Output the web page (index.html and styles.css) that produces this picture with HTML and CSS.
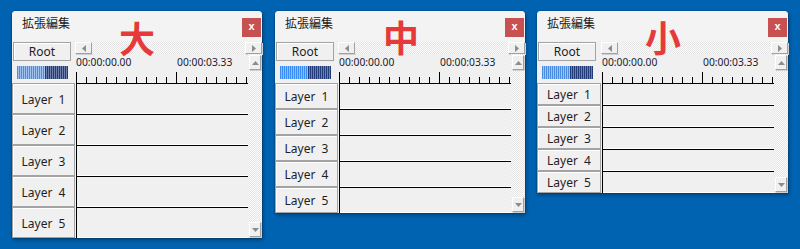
FILE: index.html
```html
<!DOCTYPE html>
<html lang="ja">
<head>
<meta charset="utf-8">
<title>拡張編集</title>
<link rel="stylesheet" href="styles.css">
</head>
<body>
<div class="desk">

  <div class="win win-l">
    <div class="titlebar"><span class="title">拡張編集</span><span class="close">x</span></div>
    <div class="body">
      <div class="lefthead"><div class="btn root">Root</div><div class="meter"></div></div>
      <div class="hscroll">
        <div class="sbtn sbtn-h"><svg width="4" height="7" viewBox="0 0 4 7"><path d="M4 0V7L0 3.5Z"/></svg></div>
        <div class="track"></div>
        <div class="sbtn sbtn-h"><svg width="4" height="7" viewBox="0 0 4 7"><path d="M0 0V7L4 3.5Z"/></svg></div>
      </div>
      <div class="header">
        <div class="times"><span class="tc">00:00:00.00</span><span class="tc">00:00:03.33</span></div>
        <div class="ruler"></div>
      </div>
      <div class="vscroll">
        <div class="sbtn sbtn-v up"><svg width="7" height="4" viewBox="0 0 7 4"><path d="M0 4H7L3.5 0Z"/></svg></div>
        <div class="sbtn sbtn-v down"><svg width="7" height="4" viewBox="0 0 7 4"><path d="M0 0H7L3.5 4Z"/></svg></div>
      </div>
      <div class="layers">
        <div class="btn layer">Layer  1</div>
        <div class="btn layer">Layer  2</div>
        <div class="btn layer">Layer  3</div>
        <div class="btn layer">Layer  4</div>
        <div class="btn layer">Layer  5</div>
      </div>
      <div class="tracks">
        <div class="row"></div><div class="row"></div><div class="row"></div><div class="row"></div><div class="row"></div>
      </div>
    </div>
  </div>

  <div class="win win-m">
    <div class="titlebar"><span class="title">拡張編集</span><span class="close">x</span></div>
    <div class="body">
      <div class="lefthead"><div class="btn root">Root</div><div class="meter meter-hi"></div></div>
      <div class="hscroll">
        <div class="sbtn sbtn-h"><svg width="4" height="7" viewBox="0 0 4 7"><path d="M4 0V7L0 3.5Z"/></svg></div>
        <div class="track"></div>
        <div class="sbtn sbtn-h"><svg width="4" height="7" viewBox="0 0 4 7"><path d="M0 0V7L4 3.5Z"/></svg></div>
      </div>
      <div class="header">
        <div class="times"><span class="tc">00:00:00.00</span><span class="tc">00:00:03.33</span></div>
        <div class="ruler"></div>
      </div>
      <div class="vscroll">
        <div class="sbtn sbtn-v up"><svg width="7" height="4" viewBox="0 0 7 4"><path d="M0 4H7L3.5 0Z"/></svg></div>
        <div class="sbtn sbtn-v down"><svg width="7" height="4" viewBox="0 0 7 4"><path d="M0 0H7L3.5 4Z"/></svg></div>
      </div>
      <div class="layers">
        <div class="btn layer">Layer  1</div>
        <div class="btn layer">Layer  2</div>
        <div class="btn layer">Layer  3</div>
        <div class="btn layer">Layer  4</div>
        <div class="btn layer">Layer  5</div>
      </div>
      <div class="tracks">
        <div class="row"></div><div class="row"></div><div class="row"></div><div class="row"></div><div class="row"></div>
      </div>
    </div>
  </div>

  <div class="win win-s">
    <div class="titlebar"><span class="title">拡張編集</span><span class="close">x</span></div>
    <div class="body">
      <div class="lefthead"><div class="btn root">Root</div><div class="meter"></div></div>
      <div class="hscroll">
        <div class="sbtn sbtn-h"><svg width="4" height="7" viewBox="0 0 4 7"><path d="M4 0V7L0 3.5Z"/></svg></div>
        <div class="track"></div>
        <div class="sbtn sbtn-h"><svg width="4" height="7" viewBox="0 0 4 7"><path d="M0 0V7L4 3.5Z"/></svg></div>
      </div>
      <div class="header">
        <div class="times"><span class="tc">00:00:00.00</span><span class="tc">00:00:03.33</span></div>
        <div class="ruler"></div>
      </div>
      <div class="vscroll">
        <div class="sbtn sbtn-v up"><svg width="7" height="4" viewBox="0 0 7 4"><path d="M0 4H7L3.5 0Z"/></svg></div>
        <div class="sbtn sbtn-v down"><svg width="7" height="4" viewBox="0 0 7 4"><path d="M0 0H7L3.5 4Z"/></svg></div>
      </div>
      <div class="layers">
        <div class="btn layer">Layer  1</div>
        <div class="btn layer">Layer  2</div>
        <div class="btn layer">Layer  3</div>
        <div class="btn layer">Layer  4</div>
        <div class="btn layer">Layer  5</div>
      </div>
      <div class="tracks">
        <div class="row"></div><div class="row"></div><div class="row"></div><div class="row"></div><div class="row"></div>
      </div>
    </div>
  </div>

  <span class="big big-l">大</span>
  <span class="big big-m">中</span>
  <span class="big big-s">小</span>
</div>
</body>
</html>
```
FILE: styles.css
```css
* { box-sizing: border-box; }

html, body {
  margin: 0;
  padding: 0;
}

body {
  width: 800px;
  height: 249px;
  overflow: hidden;
  background: #0063b1;
  font-family: "Noto Sans", "Noto Sans CJK JP", sans-serif;
  color: #1e1e1e;
}

.desk {
  position: relative;
  display: flex;
  align-items: flex-start;
  padding: 11px 0 0 12px;
  height: 249px;
}

.win {
  width: 250px;
  flex: none;
  background: #f0f0f0;
  border-radius: 4px 4px 0 0;
  box-shadow: 0 0 0 1px rgba(0, 0, 0, 0.12), 1px 2px 4px rgba(0, 0, 0, 0.35);
}

.win-l { --row: 31px; }
.win-m { --row: 26px; margin-left: 13px; }
.win-s { --row: 22px; margin-left: 12px; width: 251px; }

.titlebar {
  height: 30px;
  display: flex;
  align-items: flex-start;
  padding-left: 10px;
  background: #f3f3f3;
  border-radius: 4px 4px 0 0;
}

.title {
  margin-top: 4px;
  font-family: "Noto Sans CJK JP", sans-serif;
  font-size: 12px;
  line-height: 16px;
  color: #1a1a1a;
}

.close {
  margin: 7px 1px 0 auto;
  width: 19px;
  height: 19px;
  background: #c75050;
  color: #fff;
  font-family: "Liberation Sans", sans-serif;
  font-weight: 700;
  font-size: 11px;
  line-height: 17px;
  text-align: center;
}

.body {
  display: grid;
  grid-template-columns: 63px minmax(0, 1fr) 14px;
  grid-template-rows: 13px 29px repeat(5, var(--row));
}

.win-s .body { grid-template-columns: 64px minmax(0, 1fr) 14px; }

.btn {
  display: flex;
  align-items: center;
  justify-content: center;
  background: #f0f0f0;
  border: 1px solid #a3a3a3;
  box-shadow: inset 1px 1px 0 #fff;
  font-size: 12px;
  color: #1e1e1e;
  white-space: pre;
}

.lefthead {
  grid-column: 1;
  grid-row: 1 / 3;
  display: flex;
  flex-direction: column;
  align-items: flex-start;
}

.root {
  margin: 1px 0 0 1px;
  width: 58px;
  height: 19px;
  padding-bottom: 1px;
}

.meter {
  margin: 5px 0 0 5px;
  width: 51px;
  height: 13px;
  background:
    repeating-linear-gradient(90deg, #4b8be0 0 1px, #9fc2ef 1px 2px) left top / 28px 100% no-repeat,
    repeating-linear-gradient(90deg, #223a78 0 1px, #6f80ad 1px 2px);
}

.meter-hi {
  background:
    repeating-linear-gradient(90deg, #3a8cf2 0 1px, #8fbef5 1px 2px) left top / 28px 100% no-repeat,
    repeating-linear-gradient(90deg, #223a78 0 1px, #6f80ad 1px 2px);
}

.hscroll {
  grid-column: 2 / 4;
  grid-row: 1;
  display: flex;
}

.track, .vscroll {
  background-color: #fcfcfc;
  background-image: conic-gradient(#e4e4e4 25%, #fcfcfc 0 50%, #e4e4e4 0 75%, #fcfcfc 0);
  background-size: 2px 2px;
}

.track { flex: 1; }

.sbtn {
  flex: none;
  display: flex;
  align-items: center;
  justify-content: center;
  background: #f0f0f0;
  border: 1px solid;
  border-color: #fff #a0a0a0 #a0a0a0 #fff;
  box-shadow: 1px 1px 0 #d0d0d0;
}

.sbtn svg { display: block; fill: #8c8c8c; }

.sbtn-h {
  width: 17px;
  height: 12px;
  margin-top: 1px;
}

.vscroll {
  grid-column: 3;
  grid-row: 2 / -1;
  display: flex;
  flex-direction: column;
}

.sbtn-v {
  width: 12px;
  height: 15px;
}

.up { margin: 1px 0 0 1px; }
.down { margin: auto 0 1px 1px; }

.header {
  grid-column: 2;
  grid-row: 2;
  display: flex;
  flex-direction: column;
  padding-left: 1px;
  overflow: hidden;
}

.times {
  display: flex;
  margin-top: 2px;
  font-size: 10.3px;
  line-height: 12px;
  color: #1c1c30;
  white-space: nowrap;
}

.tc { flex: none; }
.tc:first-child { width: 101px; }

.ruler {
  margin-top: auto;
  height: 11px;
  background-image:
    repeating-linear-gradient(90deg, #000 0 1px, transparent 1px 100px),
    repeating-linear-gradient(90deg, #000 0 1px, transparent 1px 10px);
  background-size: 100% 11px, 100% 6px;
  background-position: left bottom, left bottom;
  background-repeat: no-repeat;
}

.layers {
  grid-column: 1;
  grid-row: 3 / -1;
  display: grid;
  grid-template-rows: repeat(5, 1fr);
}

.layer { padding-top: 1px; }

.tracks {
  grid-column: 2;
  grid-row: 3 / -1;
  margin-left: 1px;
  border-left: 1px solid #000;
  display: grid;
  grid-template-rows: repeat(5, 1fr);
}

.row {
  border-top: 1px solid #000;
  background: #f0f0f0;
  box-shadow: inset 0 -1px 0 #fff;
}

.big {
  position: absolute;
  font-family: "Noto Sans CJK JP", sans-serif;
  font-weight: 700;
  font-size: 36px;
  line-height: 28px;
  color: #e63a3a;
}

.big-l { left: 119px; top: 23px; }
.big-m { left: 383px; top: 22px; }
.big-s { left: 645px; top: 22px; }
```
